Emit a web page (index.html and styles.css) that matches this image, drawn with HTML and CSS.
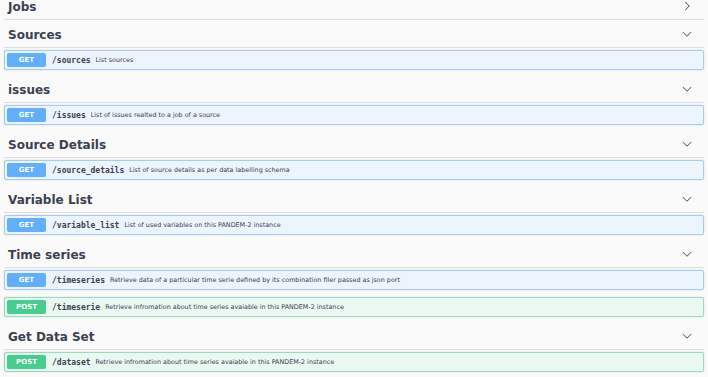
FILE: index.html
```html
<!DOCTYPE html>
<html lang="en">
<head>
  <meta charset="UTF-8">
  <title>PANDEM-2 API</title>
  <link rel="stylesheet" href="styles.css">
</head>
<body>
  <div class="wrapper">
    <div class="tag-section">
      <div class="tag">
        <h4>Jobs</h4>
        <svg viewBox="0 0 20 20"><path d="M13.25 10L6.109 2.58c-.268-.27-.268-.707 0-.979.268-.27.701-.27.969 0l7.83 7.908c.268.271.268.709 0 .979l-7.83 7.908c-.268.271-.701.27-.969 0-.268-.269-.268-.707 0-.979L13.25 10z"/></svg>
      </div>
    </div>

    <div class="tag-section">
      <div class="tag">
        <h4>Sources</h4>
        <svg viewBox="0 0 20 20"><path d="M17.418 6.109c.272-.268.709-.268.979 0s.271.701 0 .969l-7.908 7.83c-.27.268-.707.268-.979 0l-7.908-7.83c-.27-.268-.27-.701 0-.969.271-.268.709-.268.979 0L10 13.25l7.418-7.141z"/></svg>
      </div>
      <div class="opblock get">
        <span class="method">GET</span>
        <span class="path">/sources</span>
        <span class="summary">List sources</span>
      </div>
    </div>

    <div class="tag-section">
      <div class="tag">
        <h4>issues</h4>
        <svg viewBox="0 0 20 20"><path d="M17.418 6.109c.272-.268.709-.268.979 0s.271.701 0 .969l-7.908 7.83c-.27.268-.707.268-.979 0l-7.908-7.83c-.27-.268-.27-.701 0-.969.271-.268.709-.268.979 0L10 13.25l7.418-7.141z"/></svg>
      </div>
      <div class="opblock get">
        <span class="method">GET</span>
        <span class="path">/issues</span>
        <span class="summary">List of issues realted to a job of a source</span>
      </div>
    </div>

    <div class="tag-section">
      <div class="tag">
        <h4>Source Details</h4>
        <svg viewBox="0 0 20 20"><path d="M17.418 6.109c.272-.268.709-.268.979 0s.271.701 0 .969l-7.908 7.83c-.27.268-.707.268-.979 0l-7.908-7.83c-.27-.268-.27-.701 0-.969.271-.268.709-.268.979 0L10 13.25l7.418-7.141z"/></svg>
      </div>
      <div class="opblock get">
        <span class="method">GET</span>
        <span class="path">/source_details</span>
        <span class="summary">List of source details as per data labelling schema</span>
      </div>
    </div>

    <div class="tag-section">
      <div class="tag">
        <h4>Variable List</h4>
        <svg viewBox="0 0 20 20"><path d="M17.418 6.109c.272-.268.709-.268.979 0s.271.701 0 .969l-7.908 7.83c-.27.268-.707.268-.979 0l-7.908-7.83c-.27-.268-.27-.701 0-.969.271-.268.709-.268.979 0L10 13.25l7.418-7.141z"/></svg>
      </div>
      <div class="opblock get">
        <span class="method">GET</span>
        <span class="path">/variable_list</span>
        <span class="summary">List of used variables on this PANDEM-2 instance</span>
      </div>
    </div>

    <div class="tag-section">
      <div class="tag">
        <h4>Time series</h4>
        <svg viewBox="0 0 20 20"><path d="M17.418 6.109c.272-.268.709-.268.979 0s.271.701 0 .969l-7.908 7.83c-.27.268-.707.268-.979 0l-7.908-7.83c-.27-.268-.27-.701 0-.969.271-.268.709-.268.979 0L10 13.25l7.418-7.141z"/></svg>
      </div>
      <div class="opblock get">
        <span class="method">GET</span>
        <span class="path">/timeseries</span>
        <span class="summary">Retrieve data of a particular time serie defined by its combination filer passed as json port</span>
      </div>
      <div class="opblock post">
        <span class="method">POST</span>
        <span class="path">/timeserie</span>
        <span class="summary">Retrieve infromation about time series avaiable in this PANDEM-2 instance</span>
      </div>
    </div>

    <div class="tag-section">
      <div class="tag">
        <h4>Get Data Set</h4>
        <svg viewBox="0 0 20 20"><path d="M17.418 6.109c.272-.268.709-.268.979 0s.271.701 0 .969l-7.908 7.83c-.27.268-.707.268-.979 0l-7.908-7.83c-.27-.268-.27-.701 0-.969.271-.268.709-.268.979 0L10 13.25l7.418-7.141z"/></svg>
      </div>
      <div class="opblock post">
        <span class="method">POST</span>
        <span class="path">/dataset</span>
        <span class="summary">Retrieve infromation about time series avaiable in this PANDEM-2 instance</span>
      </div>
    </div>
  </div>
</body>
</html>
```

FILE: styles.css
```css
*{box-sizing:border-box;}
body{margin:0; background:#fafafa; color:#3b4151; font-family:"DejaVu Sans", sans-serif;}
.wrapper{margin-top:-6px; padding:0 4px;}

.tag-section{display:flex; flex-direction:column;}
.tag{display:flex; align-items:center; height:26px; padding:6px 12px 5px 4px; margin-bottom:2px; border-bottom:1px solid #dcdde0;}
.tag h4{flex:1; margin:0; font-size:12px; line-height:14px; font-weight:bold;}
.tag svg{width:10px; height:10px; margin-bottom:2px; fill:#3b4151;}

.opblock{display:flex; align-items:center; height:20px; padding:2px; margin-bottom:7px; border:1px solid; border-radius:2px; box-shadow:0 0 1.5px rgba(0,0,0,.19);}
.opblock.get{background:#ecf4fd; border-color:#a3cdf8;}
.opblock.post{background:#e9f8f0; border-color:#99dcbd;}

.method{width:39px; height:14px; border-radius:2px; color:#fff; font-size:7px; line-height:14px; font-weight:bold; text-align:center;}
.get .method{background:#61affe;}
.post .method{background:#49cc90;}

.path{padding:0 5px 0 6px; font-family:"DejaVu Sans Mono", monospace; font-size:8px; font-weight:bold;}
.summary{font-size:6.4px;}
```
